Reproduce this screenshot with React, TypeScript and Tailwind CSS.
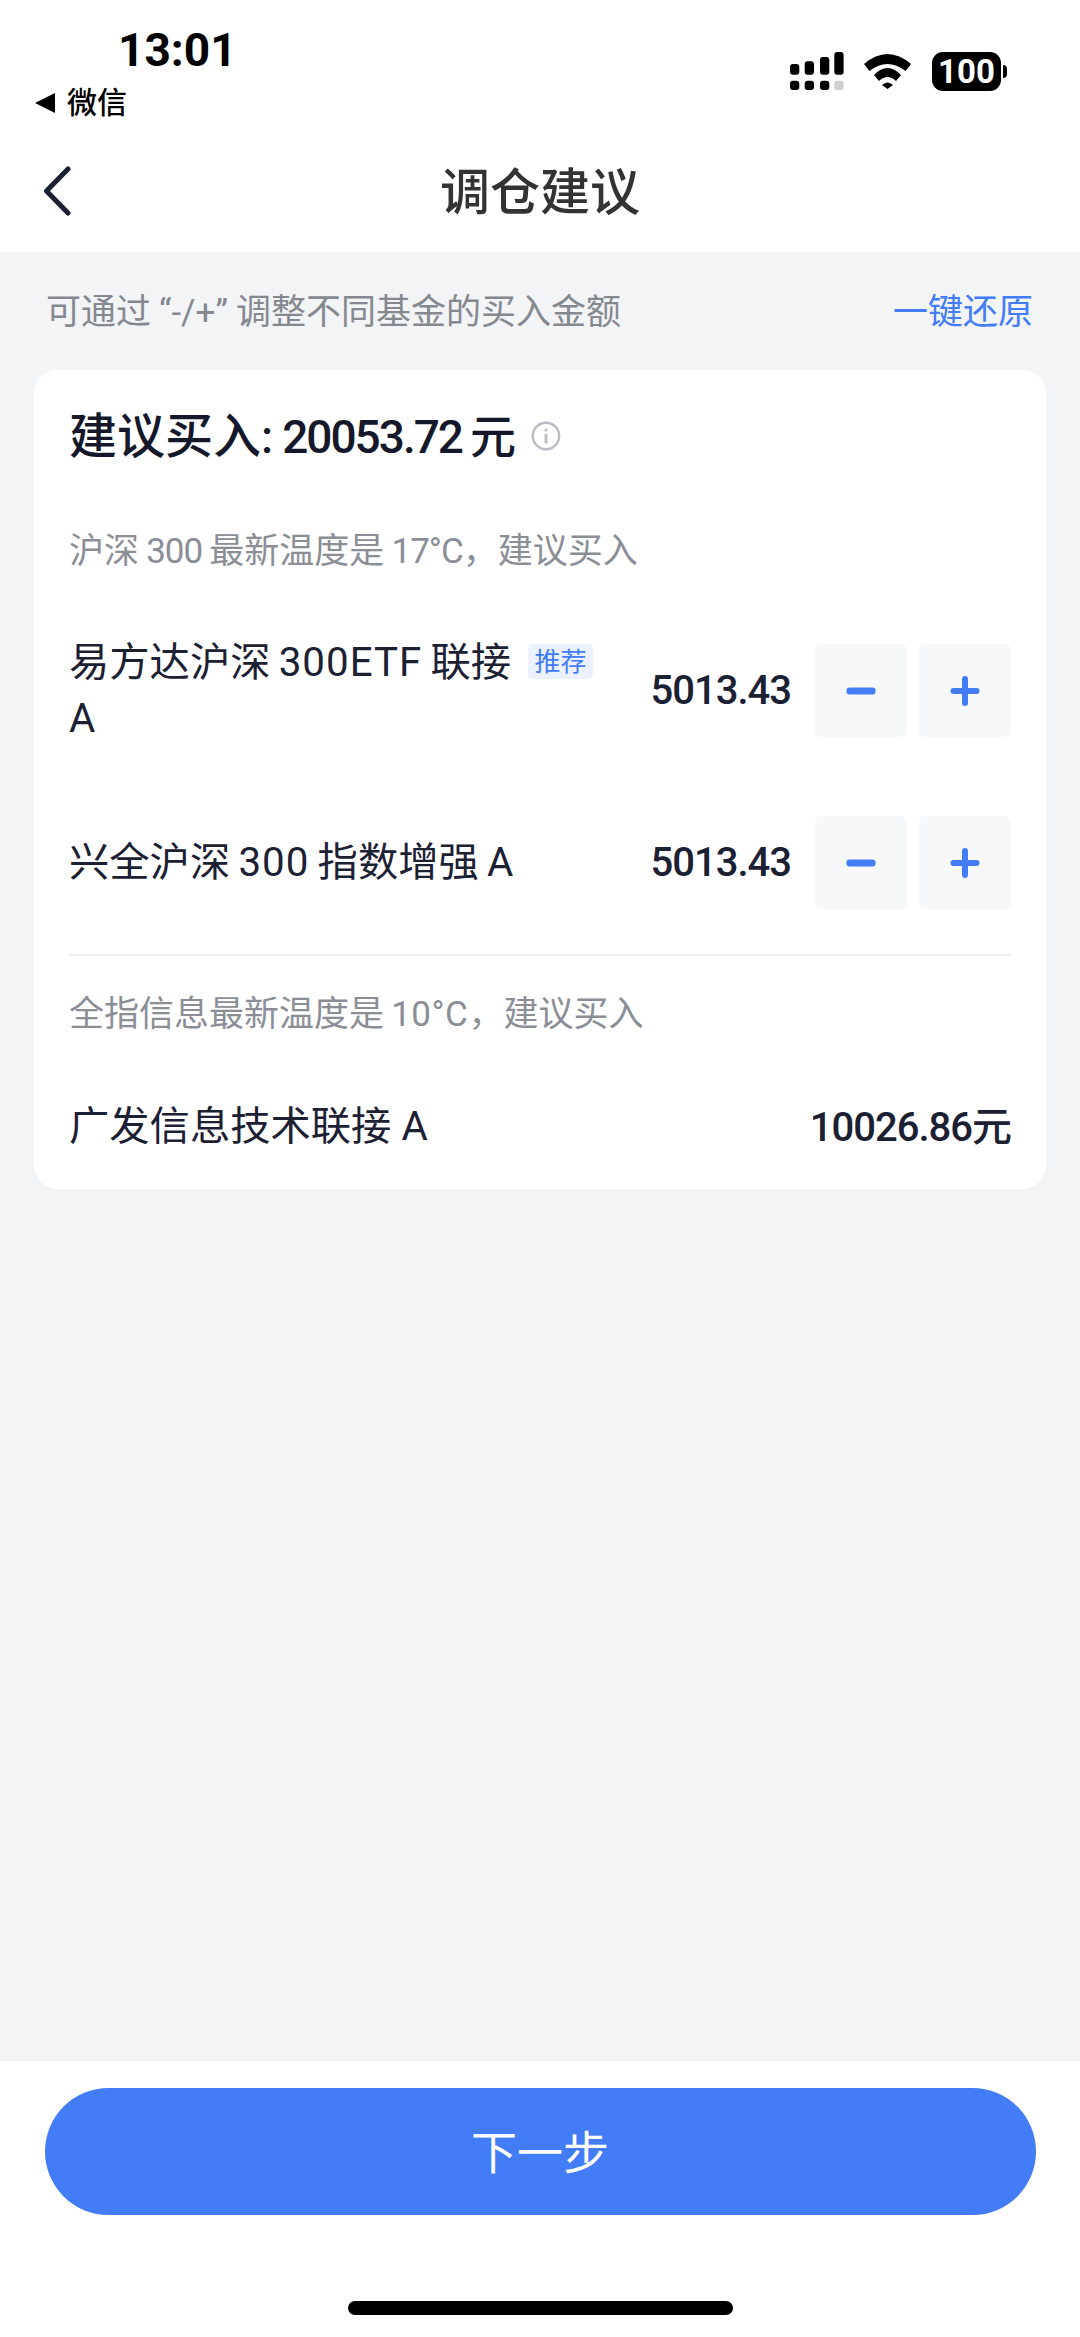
import React from "react";

const font = { fontFamily: '"Roboto", "Noto Sans CJK SC", sans-serif' };

function Signal() {
  return (
    <svg width="54" height="38" viewBox="0 0 54 38" className="block" aria-hidden="true">
      <g fill="#000">
        <rect x="0" y="12" width="9.3" height="10.7" rx="3" />
        <rect x="14.7" y="9.3" width="9.3" height="13.4" rx="3" />
        <rect x="30" y="5" width="9.3" height="17.7" rx="3" />
        <rect x="44.3" y="0" width="9.3" height="22.7" rx="3" />
        <rect x="0" y="28.7" width="9.3" height="9.3" rx="3" />
        <rect x="14.7" y="28.7" width="9.3" height="9.3" rx="3" />
        <rect x="30" y="28.7" width="9.3" height="9.3" rx="3" />
      </g>
      <rect x="44.3" y="28.7" width="9.3" height="9.3" rx="2.5" fill="#cfcfcf" />
    </svg>
  );
}

function Wifi() {
  return (
    <svg width="47" height="35" viewBox="0 0 47 35" className="block" aria-hidden="true">
      <g fill="#000">
        <path d="M0 10 Q23.5 -10 47 10 L41.5 17 Q23.5 3 5.5 17 Z" />
        <path d="M10 21 Q23.5 7 37 21 L32 27 Q23.5 19 15 27 Z" />
        <path d="M18 31 Q23.5 26 29 31 L23.5 35 Z" />
      </g>
    </svg>
  );
}

function Stepper() {
  return (
    <div className="flex gap-[12px]">
      <div className="flex h-[93px] w-[92px] items-center justify-center rounded-[6px] bg-[#f7f8fa]">
        <svg width="30" height="8" viewBox="0 0 30 8" aria-hidden="true">
          <rect width="29" height="7" x="0.5" y="0.5" rx="3" fill="#427cf7" />
        </svg>
      </div>
      <div className="flex h-[93px] w-[92px] items-center justify-center rounded-[6px] bg-[#f7f8fa]">
        <svg width="30" height="30" viewBox="0 0 30 30" aria-hidden="true">
          <rect width="29" height="6" x="0.5" y="12" rx="3" fill="#427cf7" />
          <rect width="6" height="30" x="12" y="0" rx="3" fill="#427cf7" />
        </svg>
      </div>
    </div>
  );
}

export default function App() {
  return (
    <div style={font} className="flex h-[2337px] w-[1080px] flex-col overflow-hidden bg-[#f3f4f6] text-[#1c2033]">
      <header className="h-[252px] shrink-0 bg-white">
        <div className="flex h-[132px] items-start justify-between">
          <div className="pl-[35px] text-black">
            <div className="pl-[83px] pt-[23px] text-[46px] font-bold leading-[54px]">13:01</div>
            <div className="mt-[6px] flex items-center gap-[12px] text-[30px] leading-[40px]">
              <span className="h-0 w-0 border-y-[10px] border-r-[20px] border-y-transparent border-r-black" />
              <span className="font-medium">微信</span>
            </div>
          </div>
          <div className="flex items-start pr-[73px] pt-[52px]">
            <Signal />
            <div className="ml-[20px] mt-[2px]">
              <Wifi />
            </div>
            <div className="ml-[21px] flex items-center">
              <div className="flex h-[39px] w-[69px] items-center justify-center rounded-[11px] bg-black text-[33px] font-bold leading-none text-white">
                100
              </div>
              <div className="ml-[2px] h-[13px] w-[4px] rounded-r-[4px] bg-black" />
            </div>
          </div>
        </div>
        <nav className="relative flex h-[120px] items-start justify-center">
          <svg width="30" height="50" viewBox="0 0 30 50" className="absolute left-[42px] top-[34px]" aria-hidden="true">
            <path d="M26 3 L4.5 25 L26 47" fill="none" stroke="#1c2033" strokeWidth="5" strokeLinecap="round" strokeLinejoin="round" />
          </svg>
          <h1 className="pt-[31px] text-[50px] font-medium leading-[60px] text-[#333]">调仓建议</h1>
        </nav>
      </header>

      <main className="flex-1 px-[34px]">
        <div className="flex h-[118px] items-center justify-between pl-[12px] pr-[13px] pt-[4px] text-[35px]">
          <span className="text-[#85888f]">
            可通过<span className="ml-[8px]">“</span>-/+<span className="mr-[8px]">”</span>调整不同基金的买入金额
          </span>
          <span className="text-[#427cf7]">一键还原</span>
        </div>
        <section className="h-[819px] rounded-[24px] bg-white px-[35px]">
          <div className="flex h-[134px] items-center text-[46px] font-medium leading-none text-[#14182a]">
            <span>
              <span className="text-[48px]">建议买入</span>:<span className="ml-[9px] tracking-[-2px]">20053.72</span>
              <span className="ml-[8px]">元</span>
            </span>
            <svg width="30" height="30" viewBox="0 0 30 30" className="-mt-[2px] ml-[15px]" aria-hidden="true">
              <circle cx="15" cy="15" r="13.2" fill="none" stroke="#b9bcc4" strokeWidth="2.4" />
              <rect x="13.6" y="12.5" width="2.8" height="10" rx="1" fill="#b9bcc4" />
              <rect x="13.6" y="7.5" width="2.8" height="3" rx="1" fill="#b9bcc4" />
            </svg>
          </div>
          <div className="flex h-[96px] items-center text-[35px] text-[#8b8e96]">
            <span>
              沪深{"\u2009"}<span className="tracking-[-1px]">300</span>{"\u2009"}最新温度是{"\u2009"}<span className="tracking-[-1px]">17°C</span>，建议买入
            </span>
          </div>

          <div className="mt-[34px] flex h-[113px] items-center justify-between">
            <div className="w-[540px] text-[40.3px] leading-[56px]">
              <span>易方达沪深{"\u2009"}<span className="tracking-[1px]">300ETF</span>{"\u2009"}联接</span>
              <span className="ml-[17px] inline-flex h-[35px] w-[65px] items-center justify-center rounded-[5px] bg-[#ebf1fe] align-[5px] text-[26px] leading-none text-[#427cf7]">推荐</span>
              <br />
              <span>A</span>
            </div>
            <div className="flex items-center gap-[24px]">
              <span className="text-[40px] font-medium tracking-[-1px]">5013.43</span>
              <Stepper />
            </div>
          </div>

          <div className="mt-[69px] flex h-[93px] items-center justify-between">
            <span className="pt-[2px] text-[40.3px]">兴全沪深{"\u2009"}<span className="tracking-[1px]">300</span>{"\u2009"}指数增强{"\u2009"}A</span>
            <div className="flex items-center gap-[24px]">
              <span className="text-[40px] font-medium tracking-[-1px]">5013.43</span>
              <Stepper />
            </div>
          </div>

          <div className="mt-[45px] h-[2px] bg-[#eeeff3]" />
          <div className="flex h-[118px] items-center text-[35px] text-[#8b8e96]">
            <span>
              全指信息最新温度是{"\u2009"}<span className="tracking-[0.5px]">10°C</span>，建议买入
            </span>
          </div>
          <div className="flex h-[104px] items-center justify-between pt-[3px]">
            <span className="text-[40.3px]">广发信息技术联接<span className="ml-[10px]">A</span></span>
            <span className="text-[40px] font-medium tracking-[-1px]">10026.86元</span>
          </div>
        </section>
      </main>

      <footer className="flex h-[276px] shrink-0 flex-col items-center bg-white">
        <button className="mt-[27px] flex h-[127px] w-[991px] items-center justify-center rounded-full bg-[#427cf7] pt-[3px] text-[46px] text-white">
          下一步
        </button>
        <div className="mt-[86px] h-[14px] w-[385px] rounded-full bg-black" />
      </footer>
    </div>
  );
}
